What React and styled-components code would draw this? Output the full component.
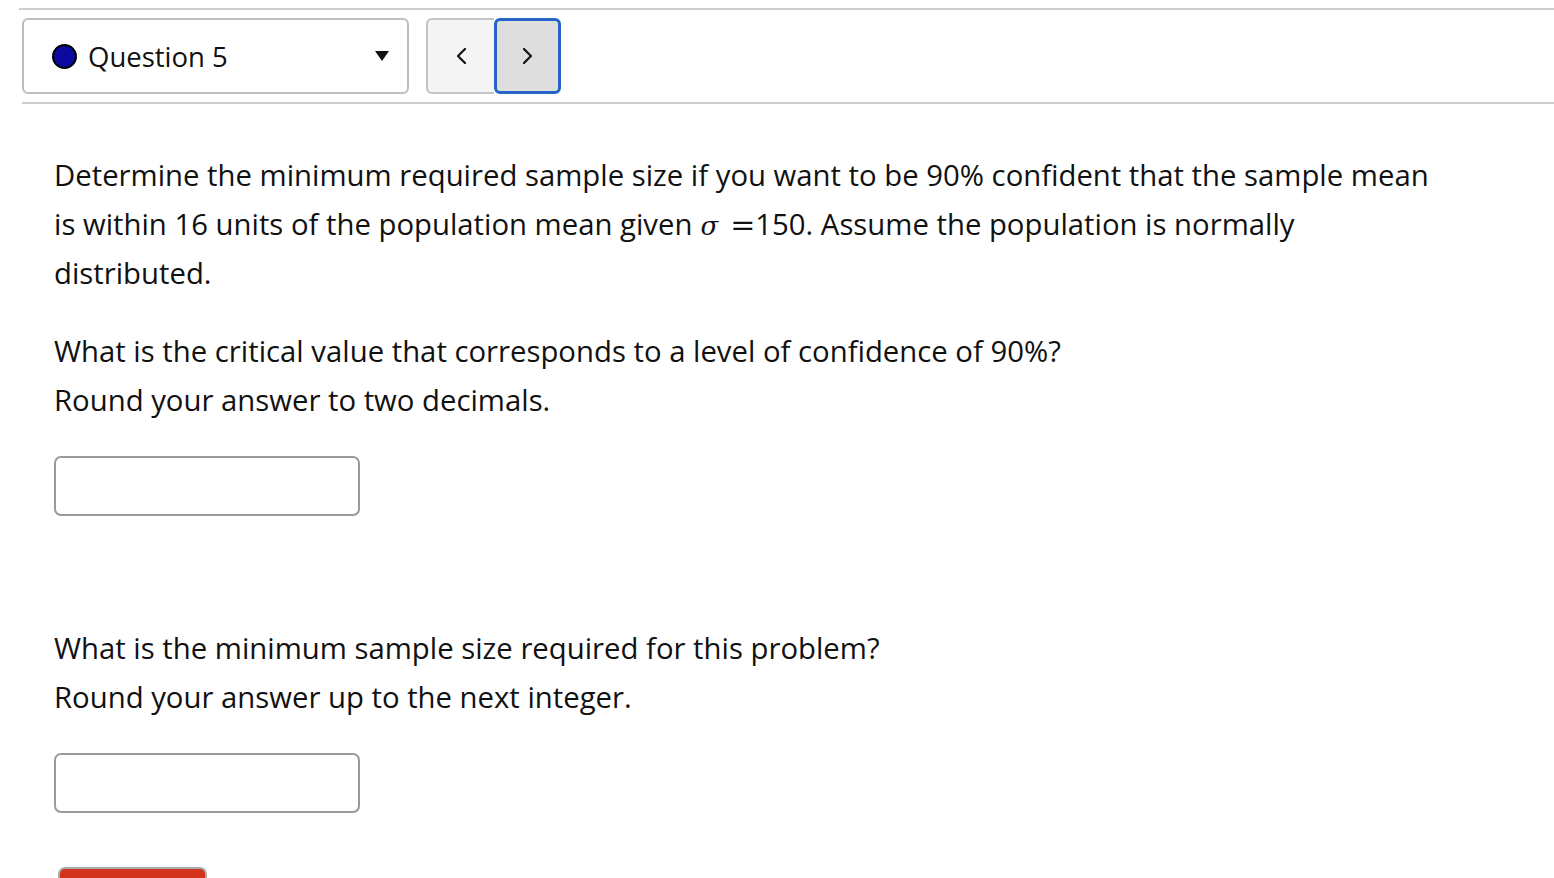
import styled, { createGlobalStyle } from 'styled-components';

const GlobalStyle = createGlobalStyle`
  body {
    margin: 0;
    background: #fff;
    font-family: "Open Sans", "Noto Sans", sans-serif;
    color: #111;
  }
`;

const Page = styled.div`
  padding-left: 22px;
`;

const Rule = styled.div`
  height: 2px;
  background: #cdcdcd;
  margin-top: ${props => props.$top || 0}px;
  margin-left: ${props => props.$left || 0}px;
`;

const Toolbar = styled.div`
  display: flex;
  align-items: center;
  gap: 17px;
  padding: 8px 0;
`;

const Select = styled.div`
  box-sizing: border-box;
  width: 387px;
  height: 76px;
  border: 2px solid #bdbdbd;
  border-radius: 6px;
  display: flex;
  align-items: center;
  padding: 0 18px 0 28px;
  font-size: 27.5px;
  color: #111;
`;

const Dot = styled.span`
  box-sizing: border-box;
  width: 25px;
  height: 25px;
  border-radius: 50%;
  background: #0a0aa0;
  border: 2px solid #000;
  margin-right: 11px;
  flex-shrink: 0;
`;

const Label = styled.span`
  flex: 1;
`;

const Caret = styled.span`
  width: 0;
  height: 0;
  border-left: 7px solid transparent;
  border-right: 7px solid transparent;
  border-top: 10px solid #111;
`;

const NavGroup = styled.div`
  display: flex;
  height: 76px;
`;

const NavButton = styled.button`
  box-sizing: border-box;
  width: ${props => (props.$active ? 67 : 68)}px;
  height: 76px;
  display: flex;
  align-items: center;
  justify-content: center;
  padding: 0;
  cursor: pointer;
  background: ${props => (props.$active ? '#dedede' : '#f5f5f5')};
  border: ${props => (props.$active ? '3px solid #2563c9' : '2px solid #c4c4c4')};
  border-right: ${props => (props.$active ? '3px solid #2563c9' : 'none')};
  border-radius: ${props => (props.$active ? '6px' : '6px 0 0 6px')};
`;

const Content = styled.div`
  padding: 47px 0 0 32px;
  font-size: 29.3px;
  line-height: 49px;
  color: #111;
  white-space: nowrap;
`;

const Para = styled.p`
  margin: 0 0 ${props => props.$gap || 0}px;
`;

const Sigma = styled.span`
  font-family: "DejaVu Serif", serif;
  font-style: italic;
  font-size: 26px;
  line-height: 1;
  margin: 0 12px 0 8px;
`;

const Eq = styled.span`
  font-family: "DejaVu Serif", serif;
  font-size: 30px;
  line-height: 1;
`;

const AnswerBox = styled.input`
  box-sizing: border-box;
  display: block;
  width: 306px;
  height: 60px;
  border: 2px solid #9a9a9a;
  border-radius: 7px;
  background: #fff;
  margin: 0 0 ${props => props.$gap || 0}px;
  font-size: 24px;
  padding: 0 12px;
`;

const SubmitButton = styled.button`
  box-sizing: border-box;
  display: block;
  width: 149px;
  height: 44px;
  margin-left: 4px;
  background: #d3321c;
  border: 2px solid #aaa;
  border-radius: 7px;
`;

function Chevron({ dir }) {
  const pts = dir === 'left' ? '9,1 2,8 9,15' : '2,1 9,8 2,15';
  return (
    <svg width="11" height="16" viewBox="0 0 11 16">
      <polyline points={pts} fill="none" stroke="#111" strokeWidth="2.2" strokeLinecap="round" strokeLinejoin="round" />
    </svg>
  );
}

export default function App() {
  return (
    <>
      <GlobalStyle />
      <Page>
        <Rule $top={8} $left={-3} />
        <Toolbar>
          <Select>
            <Dot />
            <Label>Question 5</Label>
            <Caret />
          </Select>
          <NavGroup>
            <NavButton aria-label="Previous">
              <Chevron dir="left" />
            </NavButton>
            <NavButton $active aria-label="Next">
              <Chevron dir="right" />
            </NavButton>
          </NavGroup>
        </Toolbar>
        <Rule />
        <Content>
          <Para $gap={29}>
            Determine the minimum required sample size if you want to be 90% confident that the sample mean
            <br />
            is within 16 units of the population mean given<Sigma>σ</Sigma><Eq>=</Eq>150. Assume the population is normally
            <br />
            distributed.
          </Para>
          <Para $gap={31}>
            What is the critical value that corresponds to a level of confidence of 90%?
            <br />
            Round your answer to two decimals.
          </Para>
          <AnswerBox $gap={108} />
          <Para $gap={31}>
            What is the minimum sample size required for this problem?
            <br />
            Round your answer up to the next integer.
          </Para>
          <AnswerBox $gap={54} />
          <SubmitButton />
        </Content>
      </Page>
    </>
  );
}
